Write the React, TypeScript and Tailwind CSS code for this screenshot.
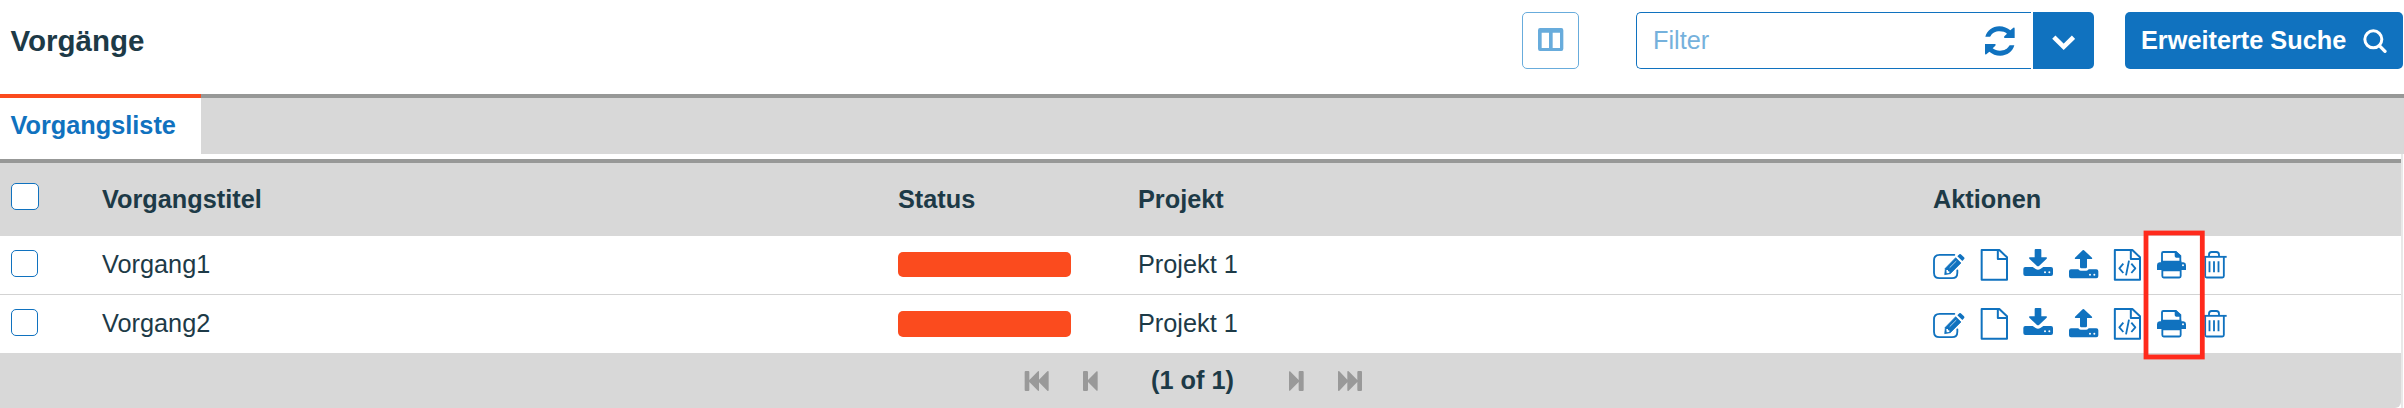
import React from "react";

const rows = [
  { title: "Vorgang1", project: "Projekt 1", row: "h-[58px]", text: "pb-[1px]", check: "mb-[3px]", pill: "h-[25px]" },
  { title: "Vorgang2", project: "Projekt 1", row: "h-[59px] border-t border-[#d3d3d3]", text: "pb-0", check: "mb-[4px]", pill: "h-[26px]" },
];

const tableGrid = "grid grid-cols-[102px_796px_240px_795px_1fr] items-center";

function ColumnsIcon() {
  return (
    <svg className="h-[23px] w-[26px]" viewBox="114 84 78 69" fill="#68acdc">
      <path
        fillRule="evenodd"
        d="M120 84H184Q190 84 190 91V146Q190 153 184 153H120Q114 153 114 146V91Q114 84 120 84ZM125 98V144H147V98ZM158 98V144H180V98Z"
      />
    </svg>
  );
}

function RefreshIcon() {
  const half =
    "M137 110C142 92 158 79 179 79C192 79 204 84 212 91L221 83Q225 81 225 86V114H195Q191 113 194 109L202 101C196 96 189 94 180 94C167 94 157 100 153 108Q152 110 150 110Z";
  return (
    <svg className="h-[30px] w-[30px]" viewBox="136 78 90 90" fill="#1072bf">
      <path d={half} />
      <path d={half} transform="rotate(180 180.500 123)" />
    </svg>
  );
}

function ChevronIcon() {
  return (
    <svg className="h-[16px] w-[23px]" viewBox="335 105 69 48" fill="none" stroke="#fff" strokeWidth="14">
      <path d="M340.500 111.500L370 140.500L399.500 111.500" />
    </svg>
  );
}

function SearchIcon() {
  return (
    <svg className="h-[24px] w-[24px]" viewBox="1268 89 72 72" fill="none" stroke="#fff" strokeWidth="9">
      <circle cx="1299" cy="120" r="25.500" />
      <path d="M1317 139L1334 156" strokeWidth="10" strokeLinecap="round" />
    </svg>
  );
}

function EditIcon() {
  return (
    <svg className="h-[58px] w-[46px]" viewBox="66 48 138 174" fill="none">
      <path
        d="M133 104.500H89Q72 104.500 72 121V158Q72 174.500 89 174.500H126Q142 174.500 142 158V151"
        stroke="#1072bf"
        strokeWidth="5.500"
        strokeLinecap="round"
      />
      <path d="M137 113L153 129L121 161L104 164L106 145Z" fill="#1072bf" stroke="#1072bf" strokeWidth="2" strokeLinejoin="round" />
      <path d="M142 109L148 103Q151 101 154 104L162 112Q165 115 162 118L157 123Z" fill="#1072bf" />
      <path d="M119 143L139 123" stroke="#fff" strokeWidth="2" />
      <path d="M109 150H114V154H118V159L110 160Z" fill="#fff" />
    </svg>
  );
}

function FileIcon() {
  return (
    <svg className="h-[58px] w-[43px]" viewBox="204 48 129 174" fill="none" stroke="#1072bf" strokeWidth="6" strokeLinejoin="round">
      <path d="M215 90H268L291 112V179H215Z" />
      <path d="M263.500 90V117H290" />
    </svg>
  );
}

function DownloadIcon() {
  return (
    <svg className="h-[58px] w-[45px]" viewBox="333 48 135 174" fill="#1072bf">
      <path d="M374 90Q374 87 377 87H391Q394 87 394 90V112H409Q412 113 410 116L387 138Q384 140 381 138L358 116Q356 113 359 112H374Z" />
      <path d="M346 141H368L377 147Q384 151 391 147L400 141H423Q429 141 429 147V162Q429 168 423 168H346Q340 168 340 162V147Q340 141 346 141Z" />
      <circle cx="405" cy="157" r="3" fill="#fff" />
      <circle cx="418" cy="157" r="3" fill="#fff" />
    </svg>
  );
}

function UploadIcon() {
  return (
    <svg className="h-[58px] w-[45px]" viewBox="468 48 135 174" fill="#1072bf">
      <path d="M518 91Q520 89 522 91L546 113Q548 117 544 117H531V141Q531 145 527 145H514Q510 145 510 141V117H497Q493 117 495 113Z" />
      <path d="M483 148H505Q507 152 512 152H529Q534 152 536 148H559Q565 148 565 154V169Q565 175 559 175H483Q477 175 477 169V154Q477 148 483 148Z" />
      <circle cx="540" cy="164" r="3" fill="#fff" />
      <circle cx="553" cy="164" r="3" fill="#fff" />
    </svg>
  );
}

function CodeFileIcon() {
  return (
    <svg className="h-[58px] w-[43px]" viewBox="603 48 129 174" fill="none" stroke="#1072bf" strokeWidth="6" strokeLinejoin="round">
      <path d="M614.500 90H667L690 112V179H614.500Z" />
      <path d="M662.500 90V117H689" />
      <path d="M640 131L628 145L640 159M664 131L676 145L664 159M657 122L648 166" strokeWidth="5.500" />
    </svg>
  );
}

function PrintIcon() {
  return (
    <svg className="h-[58px] w-[47px]" viewBox="732 48 141 174" fill="#1072bf">
      <path d="M756 128V100Q756 96 760 96H797L811 108V128" fill="#fff" stroke="#1072bf" strokeWidth="5.500" />
      <path d="M794 94H799L813 108V113H798Q794 112 794 108Z" />
      <path d="M749 127H754V122H814V127H820Q828 128 828 135V150H741V135Q741 128 749 127Z" />
      <path d="M757 151H812V168Q812 172.500 808 172.500H761Q757 172.500 757 168Z" fill="#fff" stroke="#1072bf" strokeWidth="5.500" />
      <circle cx="819" cy="136" r="3" fill="#fff" />
    </svg>
  );
}

function TrashIcon() {
  return (
    <svg className="h-[58px] w-[30px]" viewBox="873 48 90 174" fill="none" stroke="#1072bf" strokeWidth="5.500">
      <path d="M880 110.500H950" />
      <path d="M897 110V104Q897 96 905 96H919Q927 96 927 104V110" />
      <path d="M885.500 111V168Q885.500 172.500 890 172.500H937Q941.500 172.500 941.500 168V111" />
      <path d="M898.500 124V157M912 124V157M925.500 124V157" />
    </svg>
  );
}

function Checkbox({ className }: { className: string }) {
  return <span className={`ml-[11px] block rounded-[5px] border border-[#1072bf] bg-white ${className}`} />;
}

const pagerIcon = "fill-[#999]";

function Pager() {
  return (
    <footer className="flex h-[55px] items-center rounded-br-[6px] bg-[#d8d8d8] pl-[1024px]">
      <svg className={`h-[20px] w-[25px] ${pagerIcon}`} viewBox="132 93 75 60">
        <path d="M134 96Q134 93 137 93H145Q148 93 148 96V120L174 94Q177 92 177 96V119L202 94Q206 91 206 97V149Q206 155 202 152L177 127V150Q177 154 174 152L148 126V150Q148 153 145 153H137Q134 153 134 150Z" />
      </svg>
      <svg className={`ml-[34px] h-[20px] w-[15px] ${pagerIcon}`} viewBox="309 93 45 60">
        <path d="M309 96Q309 93 312 93H320Q324 93 324 96V120L350 94Q353 92 353 97V149Q353 154 350 152L324 126V150Q324 153 320 153H312Q309 153 309 150Z" />
      </svg>
      <span className="ml-[53px] w-[138px] font-bold">(1 of 1)</span>
      <svg className={`h-[20px] w-[15px] ${pagerIcon}`} viewBox="927 93 45 60">
        <path d="M971 96Q971 93 968 93H960Q956 93 956 96V120L930 94Q927 92 927 97V149Q927 154 930 152L956 126V150Q956 153 960 153H968Q971 153 971 150Z" />
      </svg>
      <svg className={`ml-[34px] h-[20px] w-[25px] ${pagerIcon}`} viewBox="1074 93 75 60">
        <path d="M1146 96Q1146 93 1143 93H1135Q1132 93 1132 96V120L1106 94Q1102 92 1102 96V119L1078 94Q1074 91 1074 97V149Q1074 155 1078 152L1102 127V150Q1102 154 1106 152L1132 126V150Q1132 153 1135 153H1143Q1146 153 1146 150Z" />
      </svg>
    </footer>
  );
}

export default function App() {
  return (
    <div className="relative h-[408px] w-[2404px] overflow-hidden bg-white font-['Liberation_Sans',Arial,sans-serif] text-[25.3px] leading-none text-[#1d3a47]">
      <header className="flex h-[94px] items-start pt-[12px]">
        <h1 className="flex h-[57px] flex-1 items-center pl-[10.500px] text-[29.5px] font-bold">Vorgänge</h1>
        <button className="flex h-[57px] w-[57px] items-center justify-center rounded-[5px] border border-[#68acdc] pb-[2px]">
          <ColumnsIcon />
        </button>
        <div className="ml-[57px] flex h-[57px] w-[458px] gap-[2px]">
          <div className="flex flex-1 items-center justify-between rounded-l-[5px] border border-r-0 border-[#1072bf] pr-[16px] pl-[16px] text-[#75b1dc]">
            <span>Filter</span>
            <RefreshIcon />
          </div>
          <button className="flex w-[61px] items-center justify-center rounded-r-[5px] bg-[#1072bf] pt-[4px]">
            <ChevronIcon />
          </button>
        </div>
        <button className="mr-px ml-[31px] flex h-[57px] w-[278px] items-center justify-between rounded-[5px] bg-[#1072bf] pr-[16px] pl-[16px] font-bold whitespace-nowrap text-white">
          <span>Erweiterte Suche</span>
          <SearchIcon />
        </button>
      </header>

      <nav className="flex h-[60px]">
        <div className="flex w-[201px] items-center border-t-4 border-[#fb4b1e] pl-[10.5px] font-bold text-[#1072bf]">
          Vorgangsliste
        </div>
        <div className="flex-1 border-t-4 border-[#979897] bg-[#d8d8d8]" />
      </nav>

      <main className="mr-px w-[2403px] border-r-2 border-[#e8e8e8] pt-[5px]">
        <div className={`${tableGrid} h-[77px] border-t-4 border-[#979897] bg-[#d8d8d8] font-bold`}>
          <Checkbox className="mb-[6px] h-[27px] w-[28px]" />
          <span>Vorgangstitel</span>
          <span>Status</span>
          <span>Projekt</span>
          <span>Aktionen</span>
        </div>
        {rows.map((row) => (
          <div key={row.title} className={`${tableGrid} ${row.row}`}>
            <Checkbox className={`h-[27px] w-[27px] ${row.check}`} />
            <span className={row.text}>{row.title}</span>
            <span className={`mt-[16px] w-[173px] self-start rounded-[5px] bg-[#fb4b1e] ${row.pill}`} />
            <span className={row.text}>{row.project}</span>
            <div className="-ml-px flex">
              <EditIcon />
              <FileIcon />
              <DownloadIcon />
              <UploadIcon />
              <CodeFileIcon />
              <PrintIcon />
              <TrashIcon />
            </div>
          </div>
        ))}
        <Pager />
      </main>

      <svg className="absolute top-[228px] left-[2140px] h-[136px] w-[68px]" viewBox="0 0 68 136" fill="none">
        <rect x="6" y="5" width="56.300" height="124" stroke="#ff2a1c" strokeWidth="4.800" />
      </svg>
    </div>
  );
}
